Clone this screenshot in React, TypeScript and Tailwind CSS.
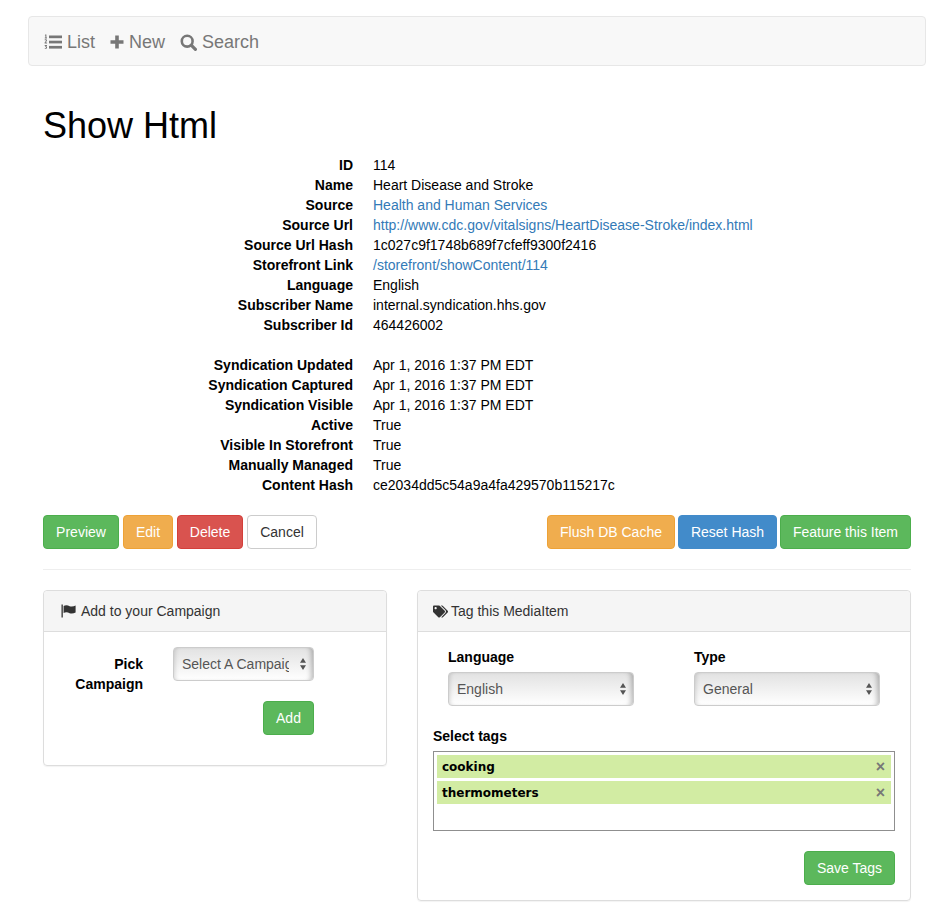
import { FaTags } from "react-icons/fa";

const fieldsTop = [
  { label: "ID", value: "114" },
  { label: "Name", value: "Heart Disease and Stroke" },
  { label: "Source", value: "Health and Human Services", link: true },
  { label: "Source Url", value: "http://www.cdc.gov/vitalsigns/HeartDisease-Stroke/index.html", link: true },
  { label: "Source Url Hash", value: "1c027c9f1748b689f7cfeff9300f2416" },
  { label: "Storefront Link", value: "/storefront/showContent/114", link: true },
  { label: "Language", value: "English" },
  { label: "Subscriber Name", value: "internal.syndication.hhs.gov" },
  { label: "Subscriber Id", value: "464426002" },
];

const fieldsBottom = [
  { label: "Syndication Updated", value: "Apr 1, 2016 1:37 PM EDT" },
  { label: "Syndication Captured", value: "Apr 1, 2016 1:37 PM EDT" },
  { label: "Syndication Visible", value: "Apr 1, 2016 1:37 PM EDT" },
  { label: "Active", value: "True" },
  { label: "Visible In Storefront", value: "True" },
  { label: "Manually Managed", value: "True" },
  { label: "Content Hash", value: "ce2034dd5c54a9a4fa429570b115217c" },
];

type Field = { label: string; value: string; link?: boolean };

const ListIcon = () => (
  <svg width="18" height="16" viewBox="0 0 18 16" fill="#777">
    <rect x="5" y="1.5" width="13" height="2.7" />
    <rect x="5" y="6.7" width="13" height="2.7" />
    <rect x="5" y="11.9" width="13" height="2.7" />
    <path d="M1.2 0.4H2.4V3.6H3V4.4H0.8V3.6H1.4V1.4H0.8Z" />
    <path d="M0.6 5.6C1.4 5 3 5.1 3 6.4C3 7.3 2 7.7 1.7 8.4H3.1V9.4H0.6V8.7C0.9 7.8 2 7.2 2 6.6C2 6.1 1.2 6.2 0.9 6.6Z" />
    <path d="M0.7 11H3V11.8L2.2 12.6C2.8 12.7 3.1 13.1 3.1 13.6C3.1 14.9 1.4 15.1 0.6 14.4L1 13.7C1.4 14.1 2.1 14.1 2.1 13.6C2.1 13.2 1.7 13.1 1.2 13.1V12.5L1.8 11.9H0.7Z" />
  </svg>
);

const PlusIcon = () => (
  <svg width="14" height="14" viewBox="0 0 14 14" fill="#777">
    <path d="M5.2 0.5H8.8V5.2H13.5V8.8H8.8V13.5H5.2V8.8H0.5V5.2H5.2Z" />
  </svg>
);

const SearchIcon = () => (
  <svg width="17" height="17" viewBox="0 0 17 17" fill="none" stroke="#777">
    <circle cx="7.2" cy="7.2" r="5.4" strokeWidth="2.6" />
    <path d="M11.2 11.2L15.4 15.4" strokeWidth="3.2" strokeLinecap="round" />
  </svg>
);

const FlagIcon = () => (
  <svg width="15" height="14" viewBox="0 0 15 14" fill="#333">
    <rect x="0.5" y="0.5" width="1.3" height="13" />
    <path d="M2.6 2C5 0.8 7 1.5 8.6 2.2C10.4 2.9 12.6 2.6 14.6 1.6V8.6C12.6 9.6 10.4 9.9 8.6 9.2C7 8.5 5 7.8 2.6 9Z" />
  </svg>
);

const Row = ({ label, value, link }: Field) => (
  <div className="flex h-5 leading-5">
    <dt className="w-[310px] shrink-0 text-right font-bold text-black">{label}</dt>
    <dd className={link ? "ml-5 text-[#337ab7]" : "ml-5 text-black"}>{value}</dd>
  </div>
);

const Btn = ({ children, color, width }: { children: string; color: string; width: string }) => (
  <button className={`h-[34px] rounded border text-center text-sm text-white ${color} ${width}`}>{children}</button>
);

const Arrows = () => (
  <svg className="pointer-events-none absolute right-[8px] top-1/2 -translate-y-1/2" width="6" height="13" viewBox="0 0 6 13">
    <path d="M3 0.5L6 5.2H0Z M3 12.5L0 7.8H6Z" fill="#555" />
  </svg>
);

const Select = ({ value, width }: { value: string; width: string }) => (
  <div className={`relative h-[34px] ${width}`}>
    <select className="h-full w-full appearance-none rounded border border-[#ccc] bg-gradient-to-b from-[#e2e2e2] to-white pl-2 pr-6 text-sm text-[#555] shadow-[inset_4px_0_4px_-3px_rgba(0,0,0,0.15),inset_-5px_0_5px_-3px_rgba(0,0,0,0.25)]">
      <option>{value}</option>
    </select>
    <Arrows />
  </div>
);

const Tag = ({ name }: { name: string }) => (
  <div className="flex h-[23px] items-center justify-between bg-[#d2eca3] pl-[5px] pr-[6px]">
    <span className="font-['DejaVu_Sans',sans-serif] text-xs font-bold leading-none text-black">{name}</span>
    <span className="text-base font-bold leading-none text-[#777]">×</span>
  </div>
);

const PanelHeader = ({ icon, title }: { icon: React.ReactNode; title: string }) => (
  <div className="flex h-[41px] items-center gap-[3px] rounded-t border-b border-[#ddd] bg-[#f5f5f5] pl-[15px] text-sm text-[#333]">
    {icon}
    <span>{title}</span>
  </div>
);

export default function App() {
  return (
    <div className="min-h-[905px] overflow-hidden bg-white pb-1 pl-[28px] pr-[15px] pt-4 font-['Liberation_Sans',Arial,sans-serif] text-sm">
      <nav className="flex h-[50px] items-center rounded border border-[#e7e7e7] bg-[#f8f8f8] pl-[15px] pt-[2px] text-lg text-[#777]">
        <span className="flex items-center gap-[5px]">
          <ListIcon />
          List
        </span>
        <span className="ml-[15px] flex items-center gap-[5px]">
          <PlusIcon />
          New
        </span>
        <span className="ml-[15px] flex items-center gap-[5px]">
          <SearchIcon />
          Search
        </span>
      </nav>

      <div className="pl-[15px] pr-[15px]">
        <h1 className="mt-[40px] h-[40px] text-4xl leading-[40px] text-black">Show Html</h1>

        <dl className="mt-[9px]">
          {fieldsTop.map((f: Field) => (
            <Row key={f.label} {...f} />
          ))}
          <div className="h-5" />
          {fieldsBottom.map((f: Field) => (
            <Row key={f.label} {...f} />
          ))}
        </dl>

        <div className="mt-5 flex justify-between">
          <div className="flex gap-1">
            <Btn color="border-[#4cae4c] bg-[#5cb85c]" width="w-[76px]">Preview</Btn>
            <Btn color="border-[#eea236] bg-[#f0ad4e]" width="w-[50px]">Edit</Btn>
            <Btn color="border-[#d43f3a] bg-[#d9534f]" width="w-[66px]">Delete</Btn>
            <button className="h-[34px] w-[70px] rounded border border-[#ccc] bg-white text-sm text-[#333]">Cancel</button>
          </div>
          <div className="flex gap-[3px]">
            <Btn color="border-[#eea236] bg-[#f0ad4e]" width="w-[128px]">Flush DB Cache</Btn>
            <Btn color="border-[#428bca] bg-[#428bca]" width="w-[99px]">Reset Hash</Btn>
            <Btn color="border-[#4cae4c] bg-[#5cb85c]" width="w-[131px]">Feature this Item</Btn>
          </div>
        </div>

        <hr className="mt-5 border-[#eee]" />

        <div className="mt-5 flex items-start gap-[30px]">
          <section className="h-[176px] w-[344px] rounded border border-[#ddd] shadow-[0_1px_1px_rgba(0,0,0,0.05)]">
            <PanelHeader
              icon={
                <span className="ml-[2px] mr-[2px]">
                  <FlagIcon />
                </span>
              }
              title="Add to your Campaign"
            />
            <div className="flex pt-[15px]">
              <label className="mt-[7px] w-[99px] text-right font-bold leading-5 text-black">Pick Campaign</label>
              <div className="ml-[30px] flex w-[141px] flex-col items-end gap-5">
                <Select value="Select A Campaign" width="w-[141px]" />
                <Btn color="border-[#4cae4c] bg-[#5cb85c]" width="w-[51px]">Add</Btn>
              </div>
            </div>
          </section>

          <section className="h-[311px] w-[494px] rounded border border-[#ddd] shadow-[0_1px_1px_rgba(0,0,0,0.05)]">
            <PanelHeader icon={<FaTags size={15} />} title="Tag this MediaItem" />
            <div className="px-[15px]">
              <div className="mt-[15px] flex gap-[60px] pl-[15px]">
                <div>
                  <label className="block h-5 font-bold leading-5 text-black">Language</label>
                  <div className="mt-[5px]">
                    <Select value="English" width="w-[186px]" />
                  </div>
                </div>
                <div>
                  <label className="block h-5 font-bold leading-5 text-black">Type</label>
                  <div className="mt-[5px]">
                    <Select value="General" width="w-[186px]" />
                  </div>
                </div>
              </div>
              <label className="mt-5 block h-5 font-bold leading-5 text-black">Select tags</label>
              <div className="mt-[5px] flex h-[80px] flex-col gap-[3px] border border-[#8f8f8f] p-[3px]">
                <Tag name="cooking" />
                <Tag name="thermometers" />
              </div>
              <div className="mt-5 flex justify-end">
                <Btn color="border-[#4cae4c] bg-[#5cb85c]" width="w-[91px]">Save Tags</Btn>
              </div>
            </div>
          </section>
        </div>
      </div>
    </div>
  );
}
